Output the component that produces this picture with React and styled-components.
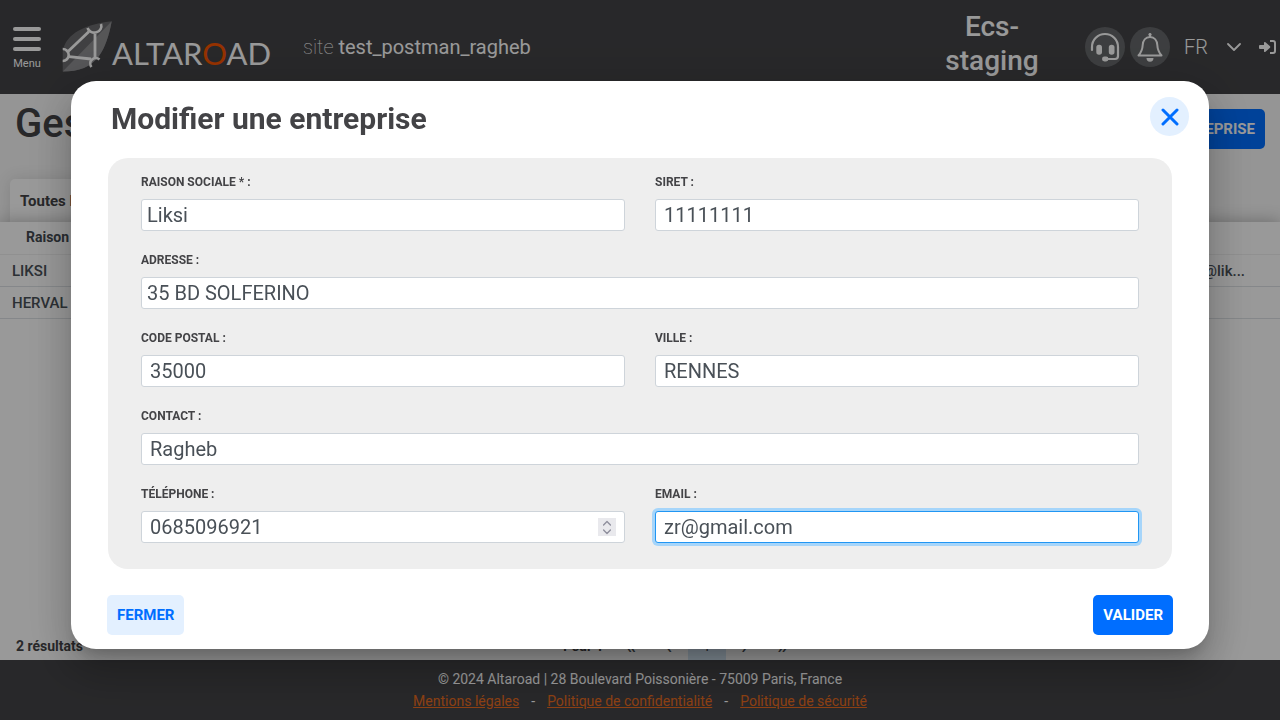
import React, { useState } from "react";
import styled, { createGlobalStyle, css } from "styled-components";

const Global = createGlobalStyle`
  *, *::before, *::after { box-sizing: border-box; }
  body { margin: 0; font-family: Roboto, "Liberation Sans", sans-serif; color: #434346; background: #f8f8f8; }
  button, input, select { font-family: inherit; }
`;

const Page = styled.div`
  min-height: 100vh;
  display: flex;
  flex-direction: column;
  overflow: hidden;
`;

const TopBar = styled.header`
  display: flex;
  align-items: center;
  height: 94px;
  padding: 0 4px 0 12px;
  background: #434346;
  color: #fff;
`;

const MenuButton = styled.button`
  display: flex;
  flex-direction: column;
  align-items: center;
  gap: 6px;
  width: 30px;
  padding: 2px 0 0;
  border: 0;
  background: none;
  color: inherit;
  font-size: 11px;
  line-height: 13px;
`;

const Bar = styled.span`
  width: 28px;
  height: 4px;
  border-radius: 2px;
  background: currentColor;
`;

const Logo = styled.a`
  display: flex;
  align-items: center;
  min-width: 216px;
  margin-left: 20px;
  color: inherit;
  text-decoration: none;
`;

const Wordmark = styled.span`
  font-family: Lato, sans-serif;
  font-size: 31px;
  line-height: 36px;
  padding-top: 12px;
`;

const WordmarkAccent = styled.span`
  color: #f95400;
`;

const Site = styled.div`
  margin-left: 25px;
  font-size: 20px;
  line-height: 24px;
`;

const SiteLabel = styled.span`
  font-weight: 100;
`;

const TopActions = styled.div`
  display: flex;
  align-items: center;
  margin-left: auto;
`;

const Company = styled.div`
  width: 106px;
  margin-right: 40px;
  padding-bottom: 6px;
  font-size: 28px;
  font-weight: 500;
  line-height: 34px;
  text-align: center;
`;

const RoundButton = styled.button`
  display: grid;
  place-items: center;
  width: 40px;
  height: 40px;
  margin-right: 5px;
  padding: 0;
  border: 0;
  border-radius: 50%;
  background: #66686b;
  color: inherit;
`;

const LangSelect = styled.select`
  appearance: none;
  margin-left: 9px;
  width: 43px;
  padding: 0;
  border: 0;
  background: none;
  color: inherit;
  font-size: 20px;
  font-weight: 300;
  line-height: 24px;
`;

const PlainButton = styled.button`
  display: grid;
  margin-left: 18px;
  padding: 0;
  border: 0;
  background: none;
  color: inherit;
`;

const Main = styled.main`
  flex: 1;
  display: flex;
  flex-direction: column;
`;

const TitleRow = styled.div`
  display: flex;
  align-items: flex-start;
  justify-content: space-between;
  height: 85px;
  padding: 6px 15px 0;
`;

const PageTitle = styled.h1`
  margin: 0;
  font-size: 40px;
  font-weight: 500;
  line-height: 48px;
`;

const Button = styled.button`
  height: 40px;
  padding: 0 10px;
  border: 0;
  border-radius: 5px;
  background: ${(p) => (p.$soft ? "#e3f0ff" : "#006eff")};
  color: ${(p) => (p.$soft ? "#006eff" : "#fff")};
  font-size: 15px;
  font-weight: 700;
  line-height: 20px;
  white-space: nowrap;
`;

const AddButton = styled(Button)`
  margin-top: 9px;
`;

const Tab = styled.div`
  align-self: flex-start;
  height: 43px;
  margin-left: 10px;
  padding: 12px 10px;
  border-radius: 5px 5px 0 0;
  background: #fff;
  box-shadow: 0 0 16px rgba(0, 0, 0, 0.12);
  font-size: 15px;
  font-weight: 700;
  line-height: 20px;
`;

const TableCard = styled.div`
  flex: 1;
  background: #fff;
  box-shadow: 0 0 16px rgba(0, 0, 0, 0.3);
`;

const Table = styled.table`
  width: 100%;
  border-collapse: collapse;
  table-layout: fixed;
  font-size: 15px;
  line-height: 20px;
  color: #495057;
`;

const HeadCell = styled.th`
  height: 32px;
  padding: 0 26px 2px;
  border-bottom: 1px solid #f0f0f0;
  text-align: left;
  font-size: 14px;
  white-space: nowrap;
  color: #434950;
`;

const Cell = styled.td`
  height: 32px;
  padding: 1px 12px 0;
  border-bottom: 1px solid #dee2e6;
  font-weight: 500;
  white-space: nowrap;
  &:last-child { text-align: right; padding-right: 35px; }
`;

const ResultsRow = styled.div`
  display: grid;
  grid-template-columns: 1fr auto 1fr;
  align-items: center;
  height: 28px;
  padding: 0 16px;
  background: #fff;
  font-size: 14px;
  font-weight: 700;
  line-height: 20px;
`;

const Pager = styled.nav`
  display: flex;
  align-items: center;
  padding-left: 82px;
`;

const PagerSummary = styled.span`
  margin-right: 8px;
`;

const PagerButton = styled.button`
  width: 38px;
  height: 28px;
  padding: 0;
  border: 0;
  background: ${(p) => (p.$current ? "#d5e8f7" : "none")};
  color: #495057;
  font-size: 15px;
`;

const PagerArrow = styled(PagerButton)`
  font-size: 24px;
`;

const Footer = styled.footer`
  height: 60px;
  padding-top: 8px;
  background: #434346;
  color: #fff;
  font-size: 14px;
  line-height: 22px;
  text-align: center;
  font-weight: 400;
`;

const FooterLinks = styled.div`
  display: flex;
  justify-content: center;
  gap: 12px;
`;

const FooterLink = styled.a`
  color: #e96c20;
`;

const Overlay = styled.div`
  position: fixed;
  inset: 0;
  display: flex;
  align-items: center;
  justify-content: center;
  padding: 10px 71px 0;
  background: rgba(0, 0, 0, 0.4);
`;

const Dialog = styled.section`
  width: 100%;
  padding: 16px 36px 14px;
  border-radius: 25px;
  background: #fff;
  box-shadow: 0 11px 15px -7px rgba(0, 0, 0, 0.2), 0 24px 38px 3px rgba(0, 0, 0, 0.14), 0 9px 46px 8px rgba(0, 0, 0, 0.12);
`;

const DialogHeader = styled.div`
  display: flex;
  align-items: flex-start;
  justify-content: space-between;
  height: 47px;
  margin: 0 -16px 14px 4px;
`;

const DialogTitle = styled.h2`
  margin: 0;
  padding-top: 4px;
  font-size: 30px;
  font-weight: 700;
  line-height: 36px;
`;

const CloseButton = styled.button`
  display: grid;
  place-items: center;
  width: 39px;
  height: 39px;
  padding: 0;
  border: 0;
  border-radius: 50%;
  background: #e3f0ff;
  color: #006eff;
`;

const Panel = styled.div`
  display: grid;
  grid-template-columns: 1fr 1fr;
  gap: 20px 30px;
  margin: 0 1px;
  padding: 15px 33px 26px;
  border-radius: 20px;
  background: #eee;
`;

const Field = styled.div`
  display: flex;
  flex-direction: column;
  gap: 8px;
  grid-column: ${(p) => (p.$wide ? "1 / -1" : "auto")};
`;

const Label = styled.label`
  font-size: 12px;
  font-weight: 700;
  line-height: 18px;
  text-transform: uppercase;
`;

const focused = css`
  border-color: #2196f3;
  box-shadow: 0 0 0 3px #a6d5fa;
`;

const Input = styled.input`
  width: 100%;
  height: 32px;
  padding: 0 ${(p) => (p.$tight ? 5 : 8)}px;
  border: 1px solid #ced4da;
  border-radius: 3px;
  background: #fff;
  color: #495057;
  font-size: 20px;
  line-height: 24px;
  outline: 0;
  appearance: textfield;
  &::-webkit-inner-spin-button { display: none; }
  ${(p) => p.$focused && focused}
`;

const StepperBox = styled.div`
  position: relative;
`;

const Stepper = styled.div`
  position: absolute;
  top: 7px;
  right: 9px;
  display: flex;
  flex-direction: column;
  background: #e9e9ed;
`;

const StepButton = styled.button`
  display: grid;
  place-items: center;
  width: 18px;
  height: 9px;
  padding: 0;
  border: 0;
  background: none;
  color: #8f8f9d;
`;

const DialogFooter = styled.div`
  display: flex;
  justify-content: space-between;
  margin-top: 26px;
`;

const LeafIcon = () => (
  <svg width="50" height="54" viewBox="0 0 50 54" fill="none" aria-hidden="true">
    <path d="M.7 51.500V32C3 17 17 5 49.700 1.300 47 16 43 28 37 36 29 47 17 51.500.7 51.500Z" fill="#6c6c6f" />
    <path d="M49.700 1.300C47 16 43 28 37 36 29 47 17 51.500.7 51.500Z" fill="#8f8f92" />
    <path d="M6 31.500 27 11.500M7 36.700l22 2.300M33 14v25" stroke="#fff" strokeWidth="2.800" />
    <path d="M25.500 8a7 6.500 0 0 0 13.500-4M.7 29a5.800 5.800 0 0 1 0 12M37.500 39.500a5.500 5.500 0 0 0-8 7.500" stroke="#fff" strokeWidth="2.600" />
  </svg>
);

const HeadsetIcon = () => (
  <svg width="30" height="30" viewBox="0 0 30 30" fill="none" aria-hidden="true">
    <path d="M2 18v-3a13 13 0 0 1 26 0v9a3 3 0 0 1-3 3h-9" stroke="currentColor" strokeWidth="2.200" strokeLinecap="round" />
    <rect x="6.300" y="12.700" width="5.700" height="10" rx="2.700" fill="currentColor" />
    <rect x="18.800" y="12.700" width="5.700" height="10" rx="2.700" fill="currentColor" />
    <rect x="12" y="24.600" width="6.500" height="4.800" rx="2.400" fill="currentColor" />
  </svg>
);

const BellIcon = () => (
  <svg width="28" height="30" viewBox="0 0 28 30" fill="none" aria-hidden="true">
    <path d="M14 2.200V5M14 5c-4.500 0-7 3.500-7.300 8C6.500 17.500 5.500 20 2.500 23.500h23c-3-3.500-4-6-4.200-10.500-.3-4.500-2.800-8-7.300-8Z" stroke="currentColor" strokeWidth="2" strokeLinecap="round" strokeLinejoin="round" />
    <circle cx="14" cy="2.500" r="1.600" fill="currentColor" />
    <path d="M10.500 26h7a3.500 3.700 0 0 1-7 0Z" fill="currentColor" />
  </svg>
);

const ChevronIcon = ({ size = 14, dir = "down" }) => (
  <svg width={size} height={size / 2 + 2} viewBox="0 0 14 9" fill="none" aria-hidden="true">
    <path d={dir === "down" ? "M1 1l6 6 6-6" : "M1 8l6-6 6 6"} stroke="currentColor" strokeWidth={size > 10 ? 1.8 : 2.4} strokeLinecap="round" strokeLinejoin="round" />
  </svg>
);

const SignInIcon = () => (
  <svg width="17" height="16" viewBox="0 0 17 16" fill="none" aria-hidden="true">
    <path d="M1 6h4V3.500q.5-1 1.500-.3L11 7.300q.7.700 0 1.400L6.500 12.800q-1 .7-1.500-.3V10H1Q0 10 0 9V7Q0 6 1 6Z" fill="currentColor" />
    <path d="M11 2h3a2 2 0 0 1 2 2v8a2 2 0 0 1-2 2h-3" stroke="currentColor" strokeWidth="2" />
  </svg>
);

const CloseIcon = () => (
  <svg width="19" height="19" viewBox="0 0 19 19" fill="none" aria-hidden="true">
    <path d="M3 3l14 14M17 3 3 17" stroke="currentColor" strokeWidth="3" strokeLinecap="round" />
  </svg>
);

const FIELDS = [
  { id: "name", label: "Raison sociale * :", value: "Liksi", tight: true },
  { id: "siret", label: "Siret :", value: "11111111" },
  { id: "address", label: "Adresse :", value: "35 BD SOLFERINO", wide: true, tight: true },
  { id: "zip", label: "Code postal :", value: "35000" },
  { id: "city", label: "Ville :", value: "RENNES" },
  { id: "contact", label: "Contact :", value: "Ragheb", wide: true },
  { id: "phone", label: "Téléphone :", value: "0685096921", type: "number" },
  { id: "email", label: "Email :", value: "zr@gmail.com", type: "email", focused: true },
];

function FormField({ field }) {
  const [value, setValue] = useState(field.value);
  const input = (
    <Input
      id={field.id}
      type={field.type || "text"}
      value={value}
      onChange={(e) => setValue(e.target.value)}
      $tight={field.tight}
      $focused={field.focused}
    />
  );
  const step = (n) => setValue((v) => String(Number(v) + n).padStart(10, "0"));
  return (
    <Field $wide={field.wide}>
      <Label htmlFor={field.id}>{field.label}</Label>
      {field.type === "number" ? (
        <StepperBox>
          {input}
          <Stepper>
            <StepButton type="button" aria-label="Augmenter" onClick={() => step(1)}><ChevronIcon size={8} dir="up" /></StepButton>
            <StepButton type="button" aria-label="Diminuer" onClick={() => step(-1)}><ChevronIcon size={8} /></StepButton>
          </Stepper>
        </StepperBox>
      ) : input}
    </Field>
  );
}

export default function App() {
  return (
    <>
      <Global />
      <Page>
        <TopBar>
          <MenuButton type="button"><Bar /><Bar /><Bar />Menu</MenuButton>
          <Logo href="#">
            <LeafIcon />
            <Wordmark>ALTAR<WordmarkAccent>O</WordmarkAccent>AD</Wordmark>
          </Logo>
          <Site><SiteLabel>site</SiteLabel> test_postman_ragheb</Site>
          <TopActions>
            <Company>Ecs-staging</Company>
            <RoundButton type="button" aria-label="Support"><HeadsetIcon /></RoundButton>
            <RoundButton type="button" aria-label="Notifications"><BellIcon /></RoundButton>
            <LangSelect aria-label="Langue" defaultValue="FR"><option>FR</option></LangSelect>
            <ChevronIcon />
            <PlainButton type="button" aria-label="Déconnexion"><SignInIcon /></PlainButton>
          </TopActions>
        </TopBar>
        <Main>
          <TitleRow>
            <PageTitle>Gestion</PageTitle>
            <AddButton type="button">ENTREPRISE</AddButton>
          </TitleRow>
          <Tab>Toutes les</Tab>
          <TableCard>
            <Table>
              <thead><tr><HeadCell>Raison</HeadCell><HeadCell /></tr></thead>
              <tbody>
                <tr><Cell>LIKSI</Cell><Cell>@lik...</Cell></tr>
                <tr><Cell>HERVAL</Cell><Cell /></tr>
              </tbody>
            </Table>
          </TableCard>
          <ResultsRow>
            <span>2 résultats</span>
            <Pager aria-label="Pagination">
              <PagerSummary>1 sur 1</PagerSummary>
              <PagerArrow type="button">«</PagerArrow>
              <PagerArrow type="button">‹</PagerArrow>
              <PagerButton type="button" $current>1</PagerButton>
              <PagerArrow type="button">›</PagerArrow>
              <PagerArrow type="button">»</PagerArrow>
            </Pager>
          </ResultsRow>
        </Main>
        <Footer>
          <div>© 2024 Altaroad | 28 Boulevard Poissonière - 75009 Paris, France</div>
          <FooterLinks>
            <FooterLink href="#">Mentions légales</FooterLink>
            <span>-</span>
            <FooterLink href="#">Politique de confidentialité</FooterLink>
            <span>-</span>
            <FooterLink href="#">Politique de sécurité</FooterLink>
          </FooterLinks>
        </Footer>
      </Page>
      <Overlay>
        <Dialog role="dialog" aria-modal="true" aria-labelledby="dialog-title">
          <DialogHeader>
            <DialogTitle id="dialog-title">Modifier une entreprise</DialogTitle>
            <CloseButton type="button" aria-label="Fermer"><CloseIcon /></CloseButton>
          </DialogHeader>
          <Panel>
            {FIELDS.map((f) => <FormField key={f.id} field={f} />)}
          </Panel>
          <DialogFooter>
            <Button type="button" $soft>FERMER</Button>
            <Button type="button">VALIDER</Button>
          </DialogFooter>
        </Dialog>
      </Overlay>
    </>
  );
}
